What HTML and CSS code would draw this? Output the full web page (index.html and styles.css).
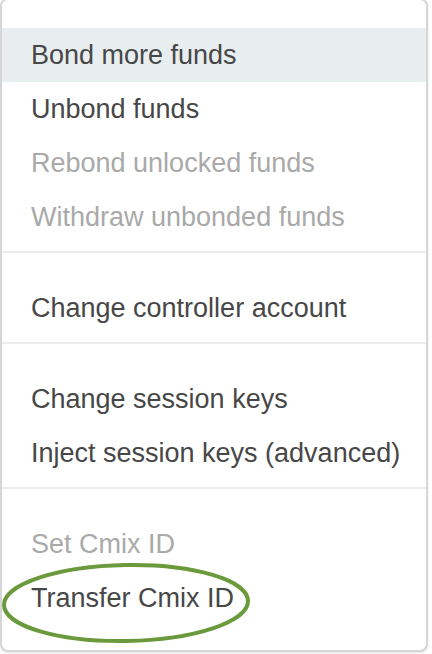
FILE: index.html
```html
<!DOCTYPE html>
<html lang="en">
<head>
<meta charset="utf-8">
<link rel="stylesheet" href="styles.css">
</head>
<body>
<div class="menu">
  <div class="section">
    <div class="item active">Bond more funds</div>
    <div class="item">Unbond funds</div>
    <div class="item disabled">Rebond unlocked funds</div>
    <div class="item disabled">Withdraw unbonded funds</div>
  </div>
  <div class="section">
    <div class="item">Change controller account</div>
  </div>
  <div class="section">
    <div class="item">Change session keys</div>
    <div class="item">Inject session keys (advanced)</div>
  </div>
  <div class="section last">
    <div class="item disabled">Set Cmix ID</div>
    <div class="item">Transfer Cmix ID</div>
  </div>
  <svg class="mark" width="256" height="90" viewBox="0 0 256 90">
    <ellipse cx="126" cy="43" rx="122" ry="38" fill="none" stroke="#6a9a3c" stroke-width="4" transform="rotate(-1 126 43)"/>
  </svg>
</div>
</body>
</html>
```
FILE: styles.css
```css
html, body {
  margin: 0;
  padding: 0;
  background: #ffffff;
}
body {
  width: 432px;
  height: 654px;
  overflow: hidden;
  font-family: "Liberation Sans", Arial, sans-serif;
}
.menu {
  position: relative;
  width: 424px;
  margin-top: -2px;
  border: 2px solid #d6d6d7;
  border-radius: 8px;
  background: #fff;
  box-shadow: 0 1px 2px rgba(34, 36, 38, 0.12);
  padding-bottom: 18px;
}
.section {
  padding: 28px 0 7px;
  border-bottom: 2px solid #ededed;
}
.section.last {
  border-bottom: none;
}
.item {
  padding: 11px 29px;
  font-size: 27px;
  line-height: 32px;
  color: #474747;
  white-space: nowrap;
}
.item.active {
  background: #e8eef0;
}
.item.disabled {
  color: #a9a9a9;
}
.mark {
  position: absolute;
  left: -2px;
  top: 560px;
}
```
